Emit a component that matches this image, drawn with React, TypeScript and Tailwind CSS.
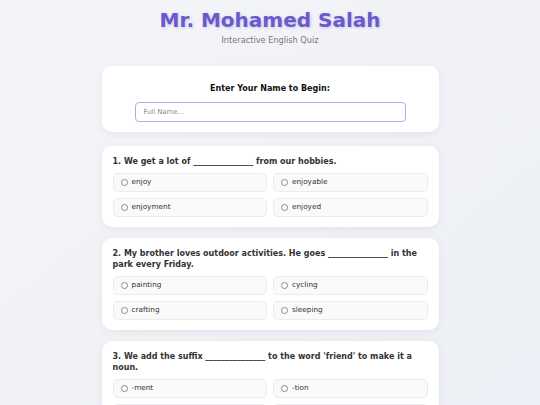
const questions = [
	{
		q: "1. We get a lot of _______________ from our hobbies.",
		options: ["enjoy", "enjoyable", "enjoyment", "enjoyed"],
	},
	{
		q: "2. My brother loves outdoor activities. He goes _______________ in the park every Friday.",
		options: ["painting", "cycling", "crafting", "sleeping"],
	},
	{
		q: "3. We add the suffix _______________ to the word 'friend' to make it a noun.",
		options: ["-ment", "-tion", "-ship", "-ness"],
	},
]

function Option({ label }: { label: string }) {
	return (
		<label className="flex items-center gap-[4px] h-[19px] px-[7px] bg-[#fafafa] border border-[#ececf0] rounded-[5px] text-[7.3px] text-[#333]">
			<span className="w-[7px] h-[7px] rounded-full border border-[#888] bg-white shrink-0"></span>
			<span>{label}</span>
		</label>
	)
}

export default function App() {
	return (
		<div className="min-h-[405px] bg-gradient-to-br from-[#f4f5f8] to-[#eceff5] pb-8" style={{ fontFamily: '"DejaVu Sans", Verdana, sans-serif' }}>
			<div className="w-[337px] mx-auto pt-[8px]">
				<h1 className="text-center text-[20px] leading-[24px] font-bold text-[#6a5acd] [text-shadow:1px_1px_3px_rgba(106,90,205,0.3)]">Mr. Mohamed Salah</h1>
				<p className="text-center text-[8.2px] leading-[12px] text-[#777] mt-[2px]">Interactive English Quiz</p>

				<div className="mt-[20px] bg-white rounded-[10px] shadow-[0_2px_8px_rgba(0,0,0,0.06)] pt-[17px] pb-[10px] flex flex-col items-center">
					<h3 className="text-[8px] leading-[12px] font-bold text-[#111]">Enter Your Name to Begin:</h3>
					<input
						placeholder="Full Name..."
						className="mt-[7px] w-[271px] h-[20px] px-[8px] text-[6.8px] border border-[#b5abe6] rounded-[4px] outline-none placeholder:text-[#888]"
					/>
				</div>

				<div className="mt-[14px] flex flex-col gap-[11px]">
					{questions.map((item) => (
						<div key={item.q} className="bg-white rounded-[10px] shadow-[0_2px_8px_rgba(0,0,0,0.06)] px-[11px] pt-[10px] pb-[10px]">
							<p className="text-[8px] leading-[11px] font-bold text-[#333]">{item.q}</p>
							<div className="mt-[6px] grid grid-cols-2 gap-[6px]">
								{item.options.map((o) => (
									<Option key={o} label={o} />
								))}
							</div>
						</div>
					))}
				</div>
			</div>
		</div>
	)
}
